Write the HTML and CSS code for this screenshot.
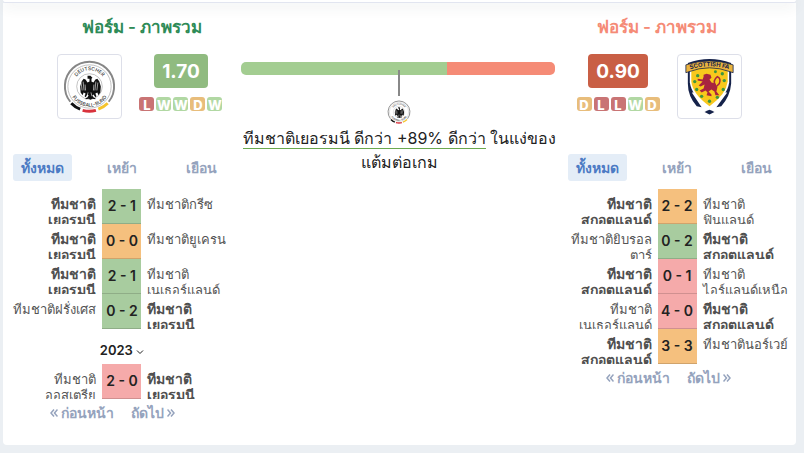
FILE: index.html
```html
<!DOCTYPE html>
<html lang="th">
<head>
    <meta charset="UTF-8">
    <meta name="viewport" content="width=device-width, initial-scale=1.0">
    <title>ฟอร์ม - ภาพรวม</title>
    <link rel="stylesheet" href="styles.css">
</head>
<body>
    <!-- shared symbols -->
    <svg class="symbols" aria-hidden="true">
        <symbol id="germany" viewBox="0 0 64 64">
            <circle cx="32" cy="32" r="22" fill="#fff" stroke="#999" stroke-width="0.6"/>
            <circle cx="32" cy="32" r="13" fill="none" stroke="#999" stroke-width="0.6"/>
            <path d="M12.500 47.500A25 25 0 1 1 51.500 47.500" fill="none" stroke="#868686" stroke-width="2"/>
            <path d="M13.500 49Q17.500 53.200 22.500 55" fill="none" stroke="#111" stroke-width="3"/>
            <path d="M25 56.200Q32 58 38.500 56.200" fill="none" stroke="#d8323c" stroke-width="3"/>
            <path d="M41 55Q46.500 53 50.500 49" fill="none" stroke="#f5c42c" stroke-width="3"/>
            <path id="arc-top" d="M15.500 32A16.500 16.500 0 0 1 48.500 32" fill="none"/>
            <path id="arc-bottom" d="M11.500 32A20.500 20.500 0 0 0 52.500 32" fill="none"/>
            <text class="crest-text"><textPath href="#arc-top" startOffset="50%">DEUTSCHER</textPath></text>
            <text class="crest-text"><textPath href="#arc-bottom" startOffset="50%">FUSSBALL-BUND</textPath></text>
            <path d="M30 21l3 0 2 2-1 1 0 3 2 1 2-3 2-1 2 3 1.500 5-0.500 6-2 3-1-3-2 1 1 3-1 1-2-3-1 1 1 2 2 1 0 1-3-0.500-2 1-2-1-3 0.500 0-1 2-1 1-2-1-1-2 3-1-1 1-3-2-1-1 3-2-3-0.500-6 1.500-5 2-3 2 1 2 3 2-1 0-3-2 0z" fill="#111"/>
            <path d="M23.500 28l1 8M25.500 27l1 9M27.500 30l0.500 6M40.500 28l-1 8M38.500 27l-1 9M36.500 30l-0.500 6M30.500 38l-1 4M33.500 38l1 4" stroke="#fff" stroke-width="0.6"/>
        </symbol>
        <symbol id="scotland" viewBox="0 0 64 64">
            <path d="M10 8Q32 0 54 8V29Q53 42 44 52L39 53 50 38H14L24 53 19 52Q10 42 10 29Z" fill="#15224a"/>
            <path d="M12 12Q32 6 52 12V28Q50 42 32 55Q14 42 12 28Z" fill="#fff"/>
            <path d="M13.500 12Q32 6 50.500 12V27Q49 40 32 52Q15 40 13.500 27Z" fill="#f8c81c"/>
            <path d="M27 58l3-1.500 2-1 2 1 3 1.500-3 1.500-2 1-2-1z" fill="#15224a"/>
            <path d="M8 10Q32 2 56 10V18L53 17Q32 9 11 17L8 18Z" fill="#e9b33e" stroke="#15224a" stroke-width="0.8"/>
            <path id="arc-banner" d="M9 15.500Q32 7.500 55 15.500" fill="none"/>
            <text class="banner-text"><textPath href="#arc-banner" startOffset="50%">SCOTTISH FA</textPath></text>
            <path d="M26 20l3-1 4 1 1 3-2 2 2 3 4 1 2 4-1 4 3 4-4 0-1-4-3-2-3 2 3 3 0 2-5-1 1-3-2-2-4 2-2-2 4-2 1-4-4 2-2-1 4-4-5-1 0-2 5 1 1-3z" fill="#a8233f"/>
            <path d="M38 31q-3-5 2-9 4 2 2 7l-3 3" fill="none" stroke="#a8233f" stroke-width="1.500"/>
            <g fill="#3f973d">
                <circle cx="20" cy="21" r="1.700"/><circle cx="45" cy="19" r="1.700"/><circle cx="17" cy="27" r="1.700"/><circle cx="47" cy="26" r="1.700"/><circle cx="19" cy="35" r="1.700"/><circle cx="46" cy="35" r="1.700"/><circle cx="24" cy="42" r="1.700"/><circle cx="40" cy="43" r="1.700"/><circle cx="32" cy="47" r="1.700"/><circle cx="38" cy="17" r="1.500"/>
            </g>
        </symbol>
        <symbol id="prev" viewBox="0 0 8 10">
            <path d="M4 1.500L1 5l3 3.500M7.500 1.500l-3 3.500 3 3.500" fill="none" stroke="currentColor" stroke-width="1.500"/>
        </symbol>
        <symbol id="next" viewBox="0 0 8 10">
            <path d="M0.500 1.500l3 3.500-3 3.500M4 1.500l3 3.500-3 3.500" fill="none" stroke="currentColor" stroke-width="1.500"/>
        </symbol>
    </svg>

    <header class="top-bar"></header>

    <main class="card">
        <section class="side home">
            <h2 class="title">ฟอร์ม - ภาพรวม</h2>
            <div class="summary">
                <div class="crest"><svg role="img" aria-label="เยอรมนี"><use href="#germany"/></svg></div>
                <div class="form">
                    <strong class="points">1.70</strong>
                    <div class="results">
                        <span class="loss">L</span><span class="win">W</span><span class="win">W</span><span class="draw">D</span><span class="win">W</span>
                    </div>
                </div>
            </div>
            <div class="tabs">
                <button type="button" class="active">ทั้งหมด</button>
                <button type="button">เหย้า</button>
                <button type="button">เยือน</button>
            </div>
            <div class="matches">
                <div class="match">
                    <span class="team"><b>ทีมชาติ<br>เยอรมนี</b></span>
                    <span class="score green">2 - 1</span>
                    <span class="team">ทีมชาติกรีซ</span>
                </div>
                <div class="match">
                    <span class="team"><b>ทีมชาติ<br>เยอรมนี</b></span>
                    <span class="score orange">0 - 0</span>
                    <span class="team">ทีมชาติยูเครน</span>
                </div>
                <div class="match">
                    <span class="team"><b>ทีมชาติ<br>เยอรมนี</b></span>
                    <span class="score green">2 - 1</span>
                    <span class="team">ทีมชาติ<br>เนเธอร์แลนด์</span>
                </div>
                <div class="match">
                    <span class="team">ทีมชาติฝรั่งเศส</span>
                    <span class="score green">0 - 2</span>
                    <span class="team"><b>ทีมชาติ<br>เยอรมนี</b></span>
                </div>
                <button type="button" class="year">2023
                    <svg viewBox="0 0 8 6"><path d="M1 1.500l3 3 3-3" fill="none" stroke="currentColor"/></svg>
                </button>
                <div class="match">
                    <span class="team">ทีมชาติ<br>ออสเตรีย</span>
                    <span class="score red">2 - 0</span>
                    <span class="team"><b>ทีมชาติ<br>เยอรมนี</b></span>
                </div>
            </div>
            <nav class="pager">
                <a href="#"><svg><use href="#prev"/></svg>ก่อนหน้า</a>
                <a href="#">ถัดไป<svg><use href="#next"/></svg></a>
            </nav>
        </section>

        <section class="compare">
            <div class="bar">
                <div class="bar-home" style="width: 65.6%"></div>
                <div class="bar-away"></div>
            </div>
            <div class="pointer"></div>
            <svg class="small-crest" role="img" aria-label="เยอรมนี"><use href="#germany"/></svg>
            <p><span class="better">ทีมชาติเยอรมนี ดีกว่า +89% ดีกว่า</span> ในแง่ของ<br>แต้มต่อเกม</p>
        </section>

        <section class="side away">
            <h2 class="title">ฟอร์ม - ภาพรวม</h2>
            <div class="summary">
                <div class="form">
                    <strong class="points">0.90</strong>
                    <div class="results">
                        <span class="draw">D</span><span class="loss">L</span><span class="loss">L</span><span class="win">W</span><span class="draw">D</span>
                    </div>
                </div>
                <div class="crest"><svg role="img" aria-label="สกอตแลนด์"><use href="#scotland"/></svg></div>
            </div>
            <div class="tabs">
                <button type="button" class="active">ทั้งหมด</button>
                <button type="button">เหย้า</button>
                <button type="button">เยือน</button>
            </div>
            <div class="matches">
                <div class="match">
                    <span class="team"><b>ทีมชาติ<br>สกอตแลนด์</b></span>
                    <span class="score orange">2 - 2</span>
                    <span class="team">ทีมชาติ<br>ฟินแลนด์</span>
                </div>
                <div class="match">
                    <span class="team">ทีมชาติยิบรอล<br>ตาร์</span>
                    <span class="score green">0 - 2</span>
                    <span class="team"><b>ทีมชาติ<br>สกอตแลนด์</b></span>
                </div>
                <div class="match">
                    <span class="team"><b>ทีมชาติ<br>สกอตแลนด์</b></span>
                    <span class="score red">0 - 1</span>
                    <span class="team">ทีมชาติ<br>ไอร์แลนด์เหนือ</span>
                </div>
                <div class="match">
                    <span class="team">ทีมชาติ<br>เนเธอร์แลนด์</span>
                    <span class="score red">4 - 0</span>
                    <span class="team"><b>ทีมชาติ<br>สกอตแลนด์</b></span>
                </div>
                <div class="match">
                    <span class="team"><b>ทีมชาติ<br>สกอตแลนด์</b></span>
                    <span class="score orange">3 - 3</span>
                    <span class="team">ทีมชาตินอร์เวย์</span>
                </div>
            </div>
            <nav class="pager">
                <a href="#"><svg><use href="#prev"/></svg>ก่อนหน้า</a>
                <a href="#">ถัดไป<svg><use href="#next"/></svg></a>
            </nav>
        </section>
    </main>
</body>
</html>
```

FILE: styles.css
```css
* {
    box-sizing: border-box;
}

body {
    margin: 0;
    padding: 0 8px 8px 3px;
    background-color: #ebeff3;
    font-family: Inter, "Open Sans", sans-serif;
    color: #222;
}

h2, p {
    margin: 0;
}

button {
    border: none;
    background: none;
    font-family: inherit;
    cursor: pointer;
}

.symbols {
    position: absolute;
    width: 0;
    height: 0;
}

.crest-text, .banner-text {
    font-size: 5px;
    font-weight: 500;
    text-anchor: middle;
    fill: #333;
}

.banner-text {
    font-size: 6px;
    font-weight: 700;
    fill: #15224a;
}

.top-bar {
    position: relative;
    height: 3px;
    background-color: #fff;
    border-bottom: 1px solid #e2e5f0;
    border-radius: 0 0 4px 4px;
    box-shadow: 0 2px 14px rgba(40, 60, 60, 0.2);
}

.card {
    display: grid;
    grid-template-columns: minmax(0, 3fr) minmax(0, 4fr) minmax(0, 3fr);
    padding-bottom: 18px;
    background-color: #fff;
    border-radius: 0 0 4px 4px;
}

.title {
    padding-top: 12px;
    font-size: 17px;
    font-weight: 600;
    line-height: 24px;
    text-align: center;
    color: #2e8b57;
}

.away .title {
    color: #f58b76;
}

.home .title {
    padding-left: 40px;
}

.home .summary {
    padding-left: 36px;
}

.away .title {
    padding-right: 40px;
}

.away .summary {
    padding-right: 36px;
}

.summary {
    display: flex;
    justify-content: center;
    gap: 17px;
    margin-top: 15px;
}

.crest {
    width: 65px;
    height: 65px;
    border: 1px solid #dddfe9;
    border-radius: 4px;
}

.crest svg {
    display: block;
    width: 100%;
    height: 100%;
}

.form {
    display: flex;
    flex-direction: column;
    align-items: center;
}

.points {
    padding: 0 8px;
    border-radius: 4px;
    background-color: #90bb80;
    font-size: 19px;
    line-height: 36px;
    height: 34px;
    color: #fff;
}

.away .points {
    background-color: #c95f45;
}

.results {
    display: flex;
    gap: 2px;
    margin-top: 9px;
}

.results span {
    width: 15px;
    height: 14px;
    border-radius: 3px;
    font-size: 13px;
    font-weight: 800;
    line-height: 16px;
    text-align: center;
    color: #fff;
}

.results .win { background-color: #b1d8a3; }
.results .draw { background-color: #e8bd7b; }
.results .loss { background-color: #c97474; }

.tabs {
    display: grid;
    grid-template-columns: 1fr 1fr 1fr;
    justify-items: center;
    margin-top: 35px;
}

.tabs button {
    padding: 0 8px;
    border-radius: 3px;
    font-size: 14px;
    font-weight: 600;
    line-height: 27px;
    white-space: nowrap;
    color: #95a3bd;
}

.tabs .active {
    background-color: #e4edf7;
    color: #4c7bc4;
}

.matches {
    margin-top: 8px;
}

.match {
    display: grid;
    grid-template-columns: minmax(0, 1fr) 39px minmax(0, 1fr);
    height: 35px;
}

.team {
    padding: 7px 6px 0;
    overflow: hidden;
    font-size: 13px;
    line-height: 16px;
    white-space: nowrap;
    color: #555;
}

.team:first-child {
    text-align: right;
}

.team b {
    font-size: 14px;
    font-weight: 600;
    color: #505050;
}

.score {
    border-bottom: 1px solid rgba(0, 0, 0, 0.15);
    font-size: 14px;
    font-weight: 600;
    line-height: 34px;
    text-align: center;
    white-space: nowrap;
}

.green { background-color: #a8cc9f; }
.orange { background-color: #f5c07e; }
.red { background-color: #f5aaaa; }

.year {
    display: block;
    width: 100%;
    height: 35px;
    padding: 6px 0 0;
    font-size: 13px;
    font-weight: 600;
    color: #222;
}

.year svg {
    width: 8px;
    height: 6px;
}

.pager {
    display: flex;
    justify-content: center;
    gap: 17px;
    padding-right: 18px;
    line-height: 28px;
}

.pager a {
    font-size: 14px;
    font-weight: 600;
    text-decoration: none;
    white-space: nowrap;
    color: #95a3bd;
}

.pager svg {
    width: 8px;
    height: 10px;
    margin: 0 3px;
}

.compare {
    padding-top: 59px;
    text-align: center;
}

.bar {
    display: flex;
    height: 13px;
    margin-right: 3px;
    border-radius: 5px;
    overflow: hidden;
}

.bar-home {
    background-color: #a3cd91;
}

.bar-away {
    flex: 1;
    background-color: #f58b76;
}

.pointer {
    position: relative;
    width: 2px;
    height: 26px;
    margin: -5px auto 0;
    background-color: #888;
}

.small-crest {
    display: block;
    width: 28px;
    height: 28px;
    margin: 2px auto 0;
}

.compare p {
    font-size: 16px;
    line-height: 24px;
    white-space: nowrap;
}

.better {
    border-bottom: 1px solid #6aa84f;
}
```
